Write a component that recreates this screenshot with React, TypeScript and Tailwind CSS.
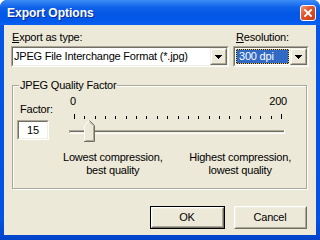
import React from "react";

const FONT = "font-['Liberation_Sans',Arial,sans-serif]";

function Arrow() {
  return (
    <svg width="7" height="4" viewBox="0 0 7 4" shapeRendering="crispEdges">
      <rect x="0" y="0" width="7" height="1" fill="#000" />
      <rect x="1" y="1" width="5" height="1" fill="#000" />
      <rect x="2" y="2" width="3" height="1" fill="#000" />
      <rect x="3" y="3" width="1" height="1" fill="#000" />
    </svg>
  );
}

function DropBtn() {
  return (
    <div className="w-[17px] h-[17px] shrink-0 bg-[#ECE9D8] border border-t-[#F1EFE2] border-l-[#F1EFE2] border-r-[#716F64] border-b-[#716F64] flex">
      <div className="flex-1 border border-t-white border-l-white border-r-[#ACA899] border-b-[#ACA899] flex items-center justify-center pt-[1px]">
        <Arrow />
      </div>
    </div>
  );
}

function Sunken({ className, children }: { className?: string; children: React.ReactNode }) {
  return (
    <div className={`border border-t-[#ACA899] border-l-[#ACA899] border-r-white border-b-white flex ${className ?? ""}`}>
      <div className="flex-1 border border-t-[#716F64] border-l-[#716F64] border-r-[#F1EFE2] border-b-[#F1EFE2] flex bg-white">
        {children}
      </div>
    </div>
  );
}

function Button({ label, def, w }: { label: string; def?: boolean; w: string }) {
  const inner = (
    <div className="flex-1 flex border border-t-white border-l-white border-r-[#716F64] border-b-[#716F64]">
      <div className="flex-1 flex items-center justify-center border border-t-[#F1EFE2] border-l-[#F1EFE2] border-r-[#ACA899] border-b-[#ACA899] bg-[#ECE9D8] pr-[1px]">
        {label}
      </div>
    </div>
  );
  return (
    <div className={`${w} h-[23px] flex ${def ? "border border-black" : ""}`}>{inner}</div>
  );
}

function CloseButton() {
  return (
    <div className="w-[16px] h-[16px] rounded-[3px] border border-white bg-[linear-gradient(135deg,#F29A7C_0%,#E2552D_40%,#C93A15_100%)] flex items-center justify-center">
      <svg width="8" height="8" viewBox="0 0 8 8">
        <path d="M1 1L7 7M7 1L1 7" stroke="#fff" strokeWidth="1.9" strokeLinecap="square" />
      </svg>
    </div>
  );
}

function Slider() {
  const ticks = Array.from({ length: 21 }, (_, i) => Math.round(74 + i * 10.35));
  return (
    <svg width="228" height="32" viewBox="63 113 228 32" shapeRendering="crispEdges" className="block">
      {ticks.map((x, i) => (
        <rect key={i} x={x} y={i === 0 || i === 20 ? 114 : 116} width="1" height={i === 0 || i === 20 ? 5 : 3} fill="#000" />
      ))}
      <rect x="69" y="130" width="216" height="1" fill="#ACA899" />
      <rect x="69" y="131" width="1" height="2" fill="#ACA899" />
      <rect x="70" y="131" width="214" height="1" fill="#716F64" />
      <rect x="70" y="132" width="214" height="1" fill="#F1EFE2" />
      <rect x="69" y="133" width="216" height="1" fill="#FFFFFF" />
      <rect x="284" y="130" width="1" height="4" fill="#FFFFFF" />
      <g shapeRendering="auto">
        <polygon points="84,126 89.5,120.5 95,126 95,142 84,142" fill="#ECE9D8" />
        <polyline points="84.5,142 84.5,125.5 89.5,120.5" fill="none" stroke="#FFFFFF" strokeWidth="1" />
        <polyline points="89.5,120.5 94.5,125.5 94.5,141.5 84,141.5" fill="none" stroke="#716F64" strokeWidth="1" />
        <polyline points="89.5,122 93.5,126 93.5,140.5 85.5,140.5" fill="none" stroke="#ACA899" strokeWidth="1" />
      </g>
    </svg>
  );
}

export default function App() {
  return (
    <div className="w-[320px] h-[240px] bg-white">
      <div
        className={`w-[320px] h-[240px] flex flex-col rounded-t-[7px] overflow-hidden bg-[#0556E6] ${FONT} text-[11px] leading-[13px] tracking-[-0.2px] text-black`}
      >
        <div className="h-[25px] shrink-0 flex items-center justify-between pl-[7px] pr-[4px] bg-[linear-gradient(180deg,#3D8CF6_0%,#2E7EF3_10%,#0E62E8_30%,#0457E6_55%,#0359EB_85%,#0A62F1_100%)]">
          <span className="text-white font-bold text-[12px] leading-[14px] tracking-normal [text-shadow:1px_1px_0_#0B2D99]">
            Export Options
          </span>
          <CloseButton />
        </div>
        <div className="flex-1 flex px-[4px] pb-[5px] bg-[linear-gradient(180deg,#0556E6,#0353E2_90%,#0243C8)]">
          <div className="flex-1 bg-[#ECE9D8] flex flex-col pt-[6px]">
            <div className="flex pl-[7px] gap-[4px]">
              <div className="w-[218px] flex flex-col">
                <div className="pl-[1px]">
                  <span className="underline underline-offset-[1px]">E</span>xport as type:
                </div>
                <Sunken className="mt-[2px] h-[21px]">
                  <div className="flex-1 flex items-center pl-[1px] whitespace-nowrap overflow-hidden">
                    JPEG File Interchange Format (*.jpg)
                  </div>
                  <DropBtn />
                </Sunken>
              </div>
              <div className="w-[76px] flex flex-col">
                <div className="pl-[3px]">
                  <span className="underline underline-offset-[1px]">R</span>esolution:
                </div>
                <Sunken className="mt-[2px] h-[21px]">
                  <div className="flex-1 flex p-[1px]">
                    <div className="flex-1 flex bg-[#1a1a1a]">
                      <div className="flex-1 flex items-center pl-[2px] bg-[#316AC5] bg-clip-padding border border-dotted border-[#E8C860] text-white whitespace-nowrap">
                        300 dpi
                      </div>
                    </div>
                  </div>
                  <DropBtn />
                </Sunken>
              </div>
            </div>

            <div className="mt-[18px] ml-[8px] w-[295px] h-[104px] relative border border-[#ACA899] shadow-[inset_1px_1px_0_#fff,1px_1px_0_#fff] flex pt-[9px]">
              <span className="absolute left-[6px] top-[-7px] px-[1px] bg-[#ECE9D8] whitespace-nowrap">
                JPEG Quality Factor
              </span>
              <div className="ml-[4px] w-[32px] flex flex-col pt-[8px]">
                <div className="pl-[3px]">Factor:</div>
                <Sunken className="mt-[4px] h-[20px]">
                  <div className="flex-1 flex items-center pl-[8px]">15</div>
                </Sunken>
              </div>
              <div className="ml-[14px] w-[228px] flex flex-col">
                <div className="flex justify-between pl-[7px] pr-[4px]">
                  <span>0</span>
                  <span>200</span>
                </div>
                <div className="mt-[5px]">
                  <Slider />
                </div>
                <div className="mt-[6px] flex justify-between">
                  <div className="text-center">
                    Lowest compression,
                    <br />
                    best quality
                  </div>
                  <div className="text-center">
                    Highest compression,
                    <br />
                    lowest quality
                  </div>
                </div>
              </div>
            </div>

            <div className="mt-[17px] flex justify-end gap-[9px] pr-[9px]">
              <Button label="OK" def w="w-[75px]" />
              <Button label="Cancel" w="w-[73px]" />
            </div>
          </div>
        </div>
      </div>
    </div>
  );
}
